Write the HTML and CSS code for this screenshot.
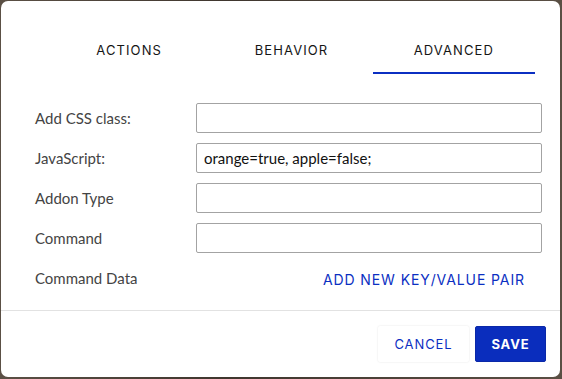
FILE: index.html
```html
<!DOCTYPE html>
<html lang="en">

<head>
  <meta charset="UTF-8" />
  <meta name="viewport" content="width=device-width, initial-scale=1.0" />
  <title>Advanced settings</title>
  <link rel="stylesheet" href="styles.css">
</head>

<body>
  <div class="dialog">
    <div class="tab-selector">
      <div class="tab-btn">ACTIONS</div>
      <div class="tab-btn">BEHAVIOR</div>
      <div class="tab-btn active">ADVANCED</div>
    </div>

    <form class="settings-form">
      <div class="form-row">
        <label for="cssclass">Add CSS class:</label>
        <input type="text" id="cssclass" name="cssclass">
      </div>
      <div class="form-row">
        <label for="javascript">JavaScript:</label>
        <input type="text" id="javascript" name="javascript" value="orange=true, apple=false;">
      </div>
      <div class="form-row">
        <label for="addontype">Addon Type</label>
        <input type="text" id="addontype" name="addontype">
      </div>
      <div class="form-row">
        <label for="command">Command</label>
        <input type="text" id="command" name="command">
      </div>
      <div class="form-row">
        <label>Command Data</label>
        <div class="link-cell">
          <button type="button" class="link-btn">ADD NEW KEY/VALUE PAIR</button>
        </div>
      </div>
    </form>

    <div class="dialog-footer">
      <button type="button" class="btn-cancel">CANCEL</button>
      <button type="button" class="btn-save">SAVE</button>
    </div>
  </div>
</body>

</html>
```

FILE: styles.css
```css
body {
  margin: 0;
  height: 379px;
  background: linear-gradient(to right, #5b5045, #3f362e 40%, #5a4f44);
  font-family: Lato, "Open Sans", sans-serif;
  overflow: hidden;
}

.dialog {
  margin: 1px 0 0 1px;
  width: 559px;
  height: 376px;
  background: white;
  border-radius: 7px;
  display: flex;
  flex-direction: column;
  box-sizing: border-box;
}

.tab-selector {
  display: flex;
  margin: 28px 0 0 47px;
  width: 487px;
}

.tab-btn {
  flex: 1;
  height: 43px;
  line-height: 43px;
  text-align: center;
  font-family: Inter, Roboto, sans-serif;
  font-size: 13px;
  letter-spacing: 1.1px;
  color: #151515;
  border-bottom: 2px solid transparent;
}

.tab-btn.active {
  border-bottom-color: #0b2fc2;
}

.settings-form {
  display: flex;
  flex-direction: column;
  gap: 10px;
  padding: 29px 18px 0 34px;
}

.form-row {
  display: flex;
  align-items: center;
  height: 30px;
}

.form-row label {
  width: 161px;
  font-size: 15px;
  color: #444;
}

.form-row input {
  flex: 1;
  height: 30px;
  box-sizing: border-box;
  padding: 0 7px;
  border: 1px solid #a3a3a3;
  border-radius: 2px;
  font-family: Lato, sans-serif;
  font-size: 15px;
  color: #111;
}

.link-cell {
  flex: 1;
  text-align: right;
}

.link-btn {
  background: none;
  border: none;
  padding: 0 17px 0 0;
  font-family: Inter, Roboto, sans-serif;
  font-size: 14px;
  letter-spacing: 0.9px;
  color: #0b2fc2;
  cursor: pointer;
}

.dialog-footer {
  margin-top: auto;
  border-top: 1px solid #e2e2e2;
  display: flex;
  justify-content: flex-end;
  gap: 6px;
  padding: 15px 14px 15px 0;
}

.dialog-footer button {
  height: 36px;
  border-radius: 2px;
  font-family: Inter, Roboto, sans-serif;
  font-size: 13px;
  letter-spacing: 0.9px;
  cursor: pointer;
}

.btn-cancel {
  width: 91px;
  background: white;
  color: #0b2fc2;
  border: none;
  box-shadow: 0 0 2px rgba(0, 0, 0, 0.12);
}

.btn-save {
  width: 71px;
  background: #0a2dbd;
  color: white;
  font-weight: bold;
  border: 1px solid #0a28a8;
}
```
